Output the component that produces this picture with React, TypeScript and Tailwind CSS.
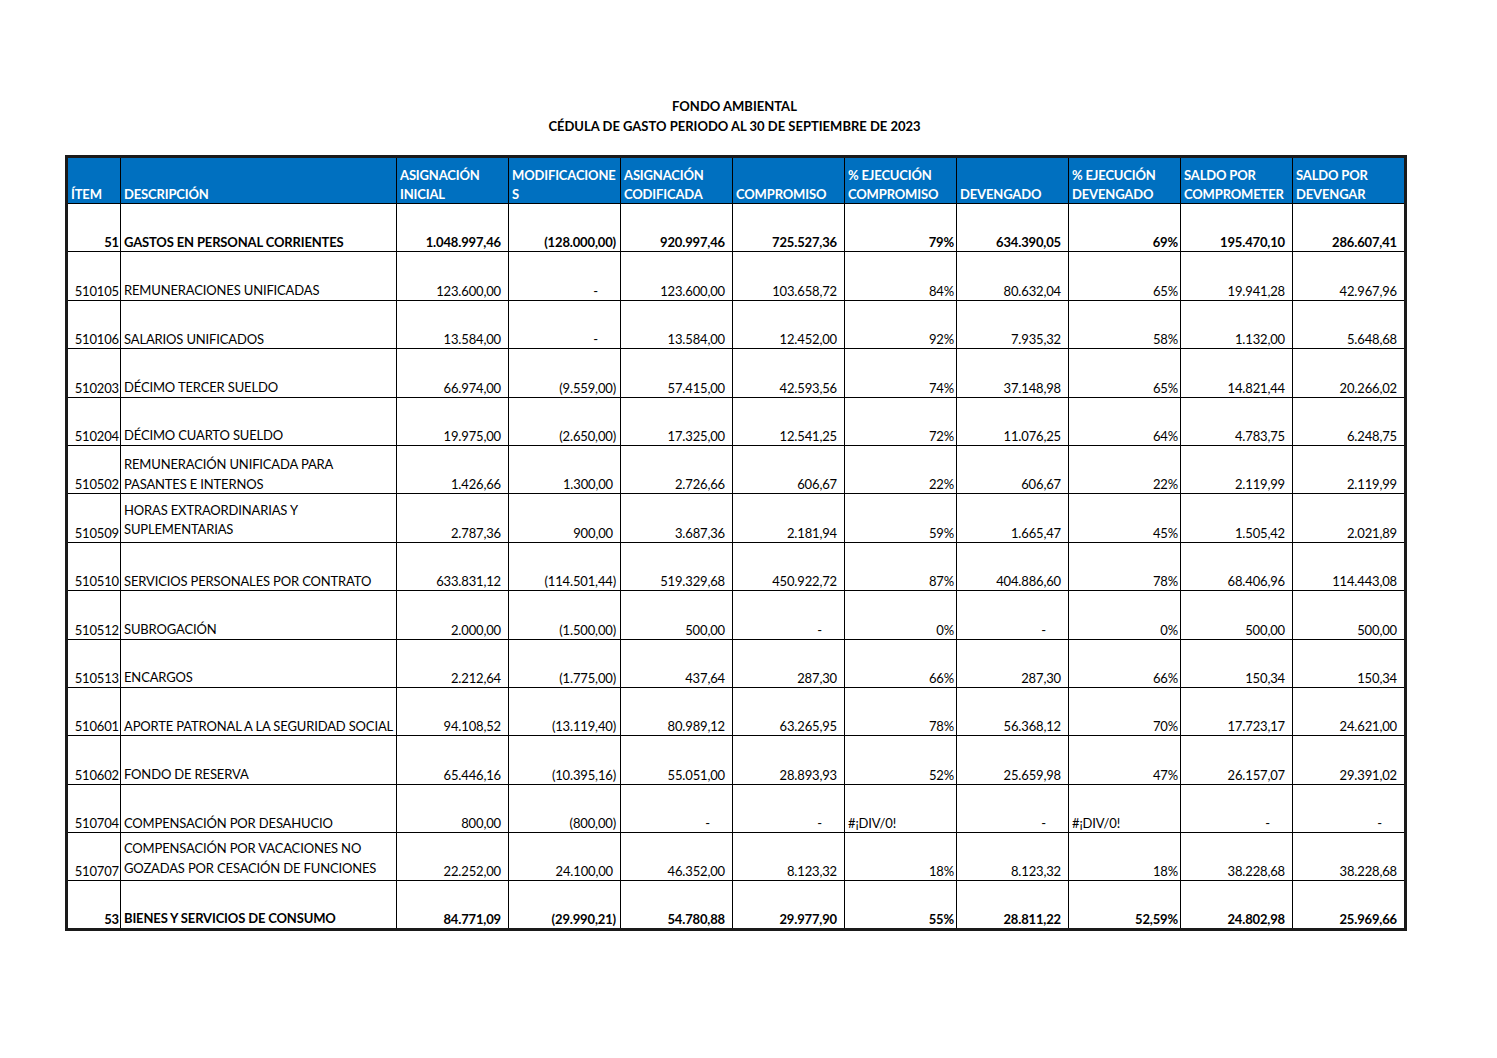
import React from 'react';

type Row = {
  item: string;
  desc: string[];
  vals: string[];
  bold?: boolean;
  lift?: boolean;
};

const rows: Row[] = [
  { item: '51', desc: ['GASTOS EN PERSONAL CORRIENTES'], bold: true, vals: ['1.048.997,46', '(128.000,00)', '920.997,46', '725.527,36', '79%', '634.390,05', '69%', '195.470,10', '286.607,41'] },
  { item: '510105', desc: ['REMUNERACIONES UNIFICADAS'], vals: ['123.600,00', '-', '123.600,00', '103.658,72', '84%', '80.632,04', '65%', '19.941,28', '42.967,96'] },
  { item: '510106', desc: ['SALARIOS UNIFICADOS'], vals: ['13.584,00', '-', '13.584,00', '12.452,00', '92%', '7.935,32', '58%', '1.132,00', '5.648,68'] },
  { item: '510203', desc: ['DÉCIMO TERCER SUELDO'], vals: ['66.974,00', '(9.559,00)', '57.415,00', '42.593,56', '74%', '37.148,98', '65%', '14.821,44', '20.266,02'] },
  { item: '510204', desc: ['DÉCIMO CUARTO SUELDO'], vals: ['19.975,00', '(2.650,00)', '17.325,00', '12.541,25', '72%', '11.076,25', '64%', '4.783,75', '6.248,75'] },
  { item: '510502', desc: ['REMUNERACIÓN UNIFICADA PARA', 'PASANTES E INTERNOS'], vals: ['1.426,66', '1.300,00', '2.726,66', '606,67', '22%', '606,67', '22%', '2.119,99', '2.119,99'] },
  { item: '510509', desc: ['HORAS EXTRAORDINARIAS Y', 'SUPLEMENTARIAS'], lift: true, vals: ['2.787,36', '900,00', '3.687,36', '2.181,94', '59%', '1.665,47', '45%', '1.505,42', '2.021,89'] },
  { item: '510510', desc: ['SERVICIOS PERSONALES POR CONTRATO'], vals: ['633.831,12', '(114.501,44)', '519.329,68', '450.922,72', '87%', '404.886,60', '78%', '68.406,96', '114.443,08'] },
  { item: '510512', desc: ['SUBROGACIÓN'], vals: ['2.000,00', '(1.500,00)', '500,00', '-', '0%', '-', '0%', '500,00', '500,00'] },
  { item: '510513', desc: ['ENCARGOS'], vals: ['2.212,64', '(1.775,00)', '437,64', '287,30', '66%', '287,30', '66%', '150,34', '150,34'] },
  { item: '510601', desc: ['APORTE PATRONAL A LA SEGURIDAD SOCIAL'], vals: ['94.108,52', '(13.119,40)', '80.989,12', '63.265,95', '78%', '56.368,12', '70%', '17.723,17', '24.621,00'] },
  { item: '510602', desc: ['FONDO DE RESERVA'], vals: ['65.446,16', '(10.395,16)', '55.051,00', '28.893,93', '52%', '25.659,98', '47%', '26.157,07', '29.391,02'] },
  { item: '510704', desc: ['COMPENSACIÓN POR DESAHUCIO'], vals: ['800,00', '(800,00)', '-', '-', '#¡DIV/0!', '-', '#¡DIV/0!', '-', '-'] },
  { item: '510707', desc: ['COMPENSACIÓN POR VACACIONES NO', 'GOZADAS POR CESACIÓN DE FUNCIONES'], lift: true, vals: ['22.252,00', '24.100,00', '46.352,00', '8.123,32', '18%', '8.123,32', '18%', '38.228,68', '38.228,68'] },
  { item: '53', desc: ['BIENES Y SERVICIOS DE CONSUMO'], bold: true, vals: ['84.771,09', '(29.990,21)', '54.780,88', '29.977,90', '55%', '28.811,22', '52,59%', '24.802,98', '25.969,66'] },
];

const headers: string[][] = [
  ['ÍTEM'],
  ['DESCRIPCIÓN'],
  ['ASIGNACIÓN', 'INICIAL'],
  ['MODIFICACIONE', 'S'],
  ['ASIGNACIÓN', 'CODIFICADA'],
  ['COMPROMISO'],
  ['% EJECUCIÓN', 'COMPROMISO'],
  ['DEVENGADO'],
  ['% EJECUCIÓN', 'DEVENGADO'],
  ['SALDO POR', 'COMPROMETER'],
  ['SALDO POR', 'DEVENGAR'],
];

const valueClass = (v: string) => {
  if (v === '-') return 'text-right pr-[22px]';
  if (v.startsWith('#')) return 'text-left pl-[3px]';
  if (v.startsWith('(')) return 'text-right pr-[4px]';
  if (v.endsWith('%')) return 'text-right pr-[2px]';
  return 'text-right pr-[7px]';
};

const App = () => {
  return (
    <div
      className="min-h-screen bg-white pt-[96px] text-[13px] text-black"
      style={{ fontFamily: 'Lato, "Open Sans", sans-serif' }}
    >
      <div className="ml-[65px] w-[1339px]">
        <div className="mb-[19px] text-center font-bold leading-[20px]">
          <div>FONDO AMBIENTAL</div>
          <div>CÉDULA DE GASTO PERIODO AL 30 DE SEPTIEMBRE DE 2023</div>
        </div>

        <table className="w-[1339px] table-fixed border-collapse border-[3px] border-[#1a1a1a] tracking-[-0.15px]">
          <colgroup>
            <col className="w-[54px]" />
            <col className="w-[276px]" />
            <col className="w-[112px]" />
            <col className="w-[112px]" />
            <col className="w-[112px]" />
            <col className="w-[112px]" />
            <col className="w-[112px]" />
            <col className="w-[112px]" />
            <col className="w-[112px]" />
            <col className="w-[112px]" />
            <col className="w-[113px]" />
          </colgroup>
          <thead>
            <tr className="h-[47px] bg-[#0070c0]">
              {headers.map((h, i) => (
                <th
                  key={i}
                  className="border border-black px-[3px] pb-0 text-left align-bottom font-bold leading-[19px] text-white"
                >
                  <div className="-mb-[1px]">
                    {h.map((line, j) => (
                      <div key={j} className="whitespace-nowrap">{line}</div>
                    ))}
                  </div>
                </th>
              ))}
            </tr>
          </thead>
          <tbody>
            {rows.map((r) => (
              <tr key={r.item} className={`h-[48.4px] ${r.bold ? 'font-bold' : ''}`}>
                <td className="border border-black pr-[1px] pb-0 text-right align-bottom leading-[19px]">
                  <div className="-mb-[1px]">{r.item}</div>
                </td>
                <td className={`border border-black pl-[3px] align-bottom leading-[19.5px] ${r.lift ? 'pb-[2px]' : 'pb-0'}`}>
                  <div className={r.lift ? '' : '-mb-[1px]'}>
                    {r.desc.map((d, j) => (
                      <div key={j} className="whitespace-nowrap">{d}</div>
                    ))}
                  </div>
                </td>
                {r.vals.map((v, j) => (
                  <td key={j} className={`border border-black pb-0 align-bottom leading-[19px] whitespace-nowrap ${valueClass(v)}`}>
                    <div className="-mb-[1px]">{v}</div>
                  </td>
                ))}
              </tr>
            ))}
          </tbody>
        </table>
      </div>
    </div>
  );
};

export default App;
